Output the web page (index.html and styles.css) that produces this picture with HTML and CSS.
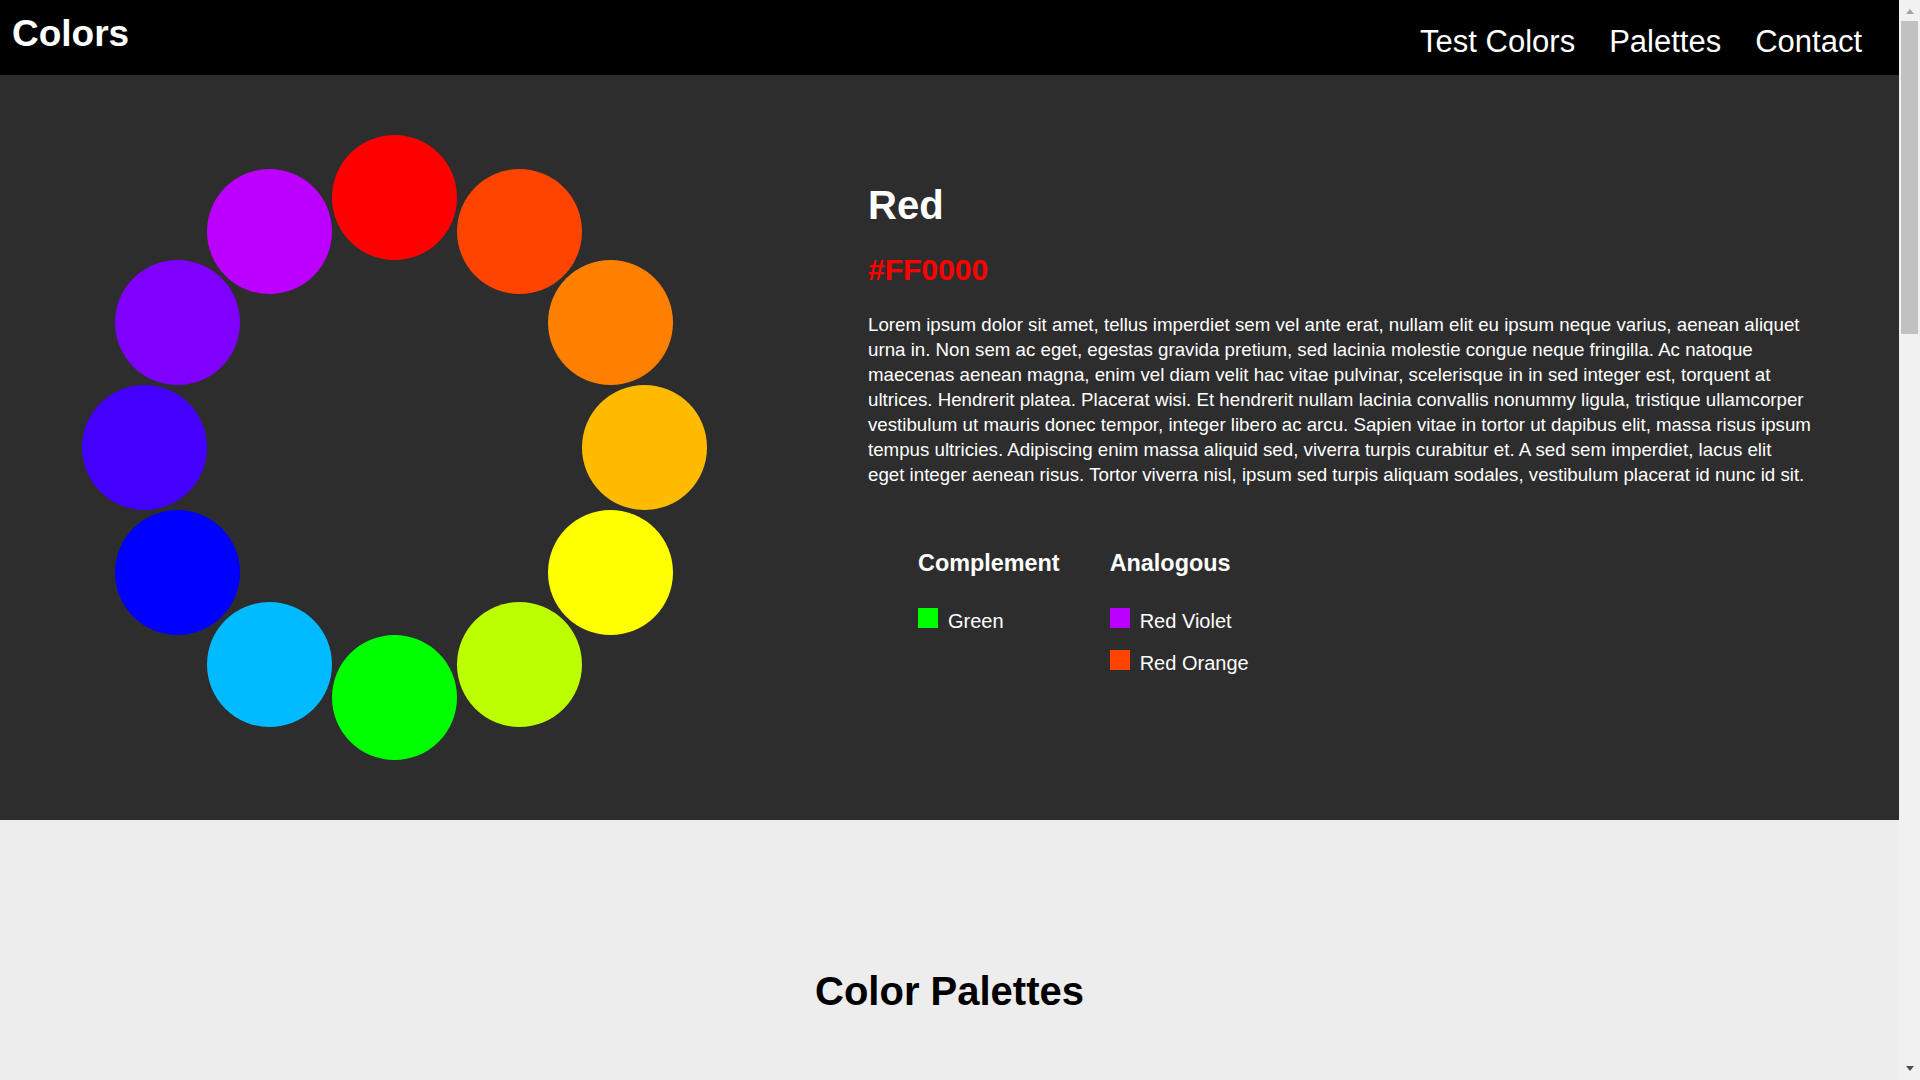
FILE: index.html
```html
<!DOCTYPE html>
<html lang="en">
<head>
<meta charset="utf-8">
<title>Colors</title>
<link rel="stylesheet" href="styles.css">
</head>
<body>
<div class="page">
<header class="topbar">
  <div class="logo">Colors</div>
  <nav class="nav">
    <a href="#" class="nav-link">Test Colors</a>
    <a href="#" class="nav-link">Palettes</a>
    <a href="#" class="nav-link">Contact</a>
  </nav>
</header>

<section class="hero">
  <div class="wheel-col">
    <div class="wheel">
      <div class="dot c1"></div>
      <div class="dot c2"></div>
      <div class="dot c3"></div>
      <div class="dot c4"></div>
      <div class="dot c5"></div>
      <div class="dot c6"></div>
      <div class="dot c7"></div>
      <div class="dot c8"></div>
      <div class="dot c9"></div>
      <div class="dot c10"></div>
      <div class="dot c11"></div>
      <div class="dot c12"></div>
    </div>
  </div>
  <div class="info">
    <h1 class="color-name">Red</h1>
    <h2 class="color-hex">#FF0000</h2>
    <p class="desc">Lorem ipsum dolor sit amet, tellus imperdiet sem vel ante erat, nullam elit eu ipsum neque varius, aenean aliquet urna in. Non sem ac eget, egestas gravida pretium, sed lacinia molestie congue neque fringilla. Ac natoque maecenas aenean magna, enim vel diam velit hac vitae pulvinar, scelerisque in in sed integer est, torquent at ultrices. Hendrerit platea. Placerat wisi. Et hendrerit nullam lacinia convallis nonummy ligula, tristique ullamcorper vestibulum ut mauris donec tempor, integer libero ac arcu. Sapien vitae in tortor ut dapibus elit, massa risus ipsum tempus ultricies. Adipiscing enim massa aliquid sed, viverra turpis curabitur et. A sed sem imperdiet, lacus elit eget integer aenean risus. Tortor viverra nisl, ipsum sed turpis aliquam sodales, vestibulum placerat id nunc id sit.</p>
    <div class="relations">
      <div class="rel-col">
        <h3 class="rel-title">Complement</h3>
        <div class="rel-item"><span class="swatch sw-green"></span><span>Green</span></div>
      </div>
      <div class="rel-col">
        <h3 class="rel-title">Analogous</h3>
        <div class="rel-item"><span class="swatch sw-redviolet"></span><span>Red Violet</span></div>
        <div class="rel-item"><span class="swatch sw-redorange"></span><span>Red Orange</span></div>
      </div>
    </div>
  </div>
</section>

<section class="palettes">
  <h2 class="palettes-title">Color Palettes</h2>
  <div class="palette-list"></div>
</section>
</div>

<div class="scrollbar" aria-hidden="true">
  <div class="sb-btn"><span class="sb-arrow-up"></span></div>
  <div class="sb-track"><div class="sb-thumb"></div></div>
  <div class="sb-btn"><span class="sb-arrow-down"></span></div>
</div>
</body>
</html>
```

FILE: styles.css
```css
html, body {
  margin: 0;
  padding: 0;
}

body {
  font-family: "Liberation Sans", Arial, sans-serif;
  background: #ededed;
  color: #000;
}

.page {
  margin-right: 21px;
}

/* scrollbar overlay fixed to the right edge of the window */
.scrollbar {
  position: fixed;
  top: 0;
  right: 0;
  width: 21px;
  height: 100vh;
  background: #f1f1f1;
  display: flex;
  flex-direction: column;
}

.sb-btn {
  height: 21px;
  flex: none;
  display: flex;
  justify-content: center;
  align-items: center;
}

.sb-arrow-up {
  width: 0;
  height: 0;
  border-left: 4.5px solid transparent;
  border-right: 4.5px solid transparent;
  border-bottom: 5px solid #a3a3a3;
  margin-top: 2px;
}

.sb-arrow-down {
  width: 0;
  height: 0;
  border-left: 4.5px solid transparent;
  border-right: 4.5px solid transparent;
  border-top: 5px solid #505050;
  margin-top: -2px;
}

.sb-track {
  flex: 1;
  padding: 0 2px;
}

.sb-thumb {
  height: 313px;
  background: #c1c1c1;
}

.topbar {
  display: flex;
  justify-content: space-between;
  align-items: flex-start;
  height: 75px;
  background: #000;
  color: #fff;
  padding: 0 37px 0 12px;
}

.logo {
  font-size: 37px;
  font-weight: bold;
  line-height: 42px;
  margin-top: 13px;
}

.nav {
  display: flex;
  gap: 34px;
  margin-top: 24px;
}

.nav-link {
  color: #fff;
  text-decoration: none;
  font-size: 31px;
  line-height: 36px;
}

.hero {
  display: grid;
  grid-template-columns: 788px 1fr;
  background: #2d2d2d;
  padding: 60px 0;
  color: #fff;
}

.wheel-col {
  display: flex;
  justify-content: center;
}

.wheel {
  position: relative;
  width: 625px;
  height: 625px;
}

.dot {
  position: absolute;
  width: 125px;
  height: 125px;
  border-radius: 50%;
}

.c1 { left: 250px; top: 0; background: #ff0000; }
.c2 { left: 375px; top: 33.5px; background: #ff4400; }
.c3 { left: 466.5px; top: 125px; background: #ff8000; }
.c4 { left: 500px; top: 250px; background: #ffbb00; }
.c5 { left: 466.5px; top: 375px; background: #ffff00; }
.c6 { left: 375px; top: 466.5px; background: #bbff00; }
.c7 { left: 250px; top: 500px; background: #00ff00; }
.c8 { left: 125px; top: 466.5px; background: #00bbff; }
.c9 { left: 33.5px; top: 375px; background: #0000ff; }
.c10 { left: 0; top: 250px; background: #4400ff; }
.c11 { left: 33.5px; top: 125px; background: #8000ff; }
.c12 { left: 125px; top: 33.5px; background: #bb00ff; }

.info {
  padding: 0 88px 0 80px;
}

.color-name {
  font-size: 40px;
  line-height: 46px;
  font-weight: bold;
  margin: 47px 0 0;
}

.color-hex {
  font-size: 30px;
  line-height: 34px;
  font-weight: bold;
  color: #ff0000;
  margin: 25px 0 0;
}

.desc {
  font-size: 18.72px;
  line-height: 25px;
  margin: 25px 0 0;
}

.relations {
  display: flex;
  gap: 50px;
  margin: 63px 0 0 50px;
}

.rel-title {
  font-size: 23.4px;
  line-height: 27px;
  font-weight: bold;
  margin: 0 0 31px;
}

.rel-item {
  display: flex;
  align-items: baseline;
  font-size: 20px;
  line-height: 23px;
  margin-bottom: 16.5px;
}

.swatch {
  display: block;
  width: 20px;
  height: 20px;
  margin-right: 10px;
  flex: none;
}

.sw-green { background: #00ff00; }
.sw-redviolet { background: #bb00ff; }
.sw-redorange { background: #ff4400; }

.palettes {
  background: #ededed;
  padding: 148px 0 0;
  min-height: 2614px;
}

.palettes-title {
  text-align: center;
  font-size: 40px;
  line-height: 46px;
  font-weight: bold;
  margin: 0;
}
```
